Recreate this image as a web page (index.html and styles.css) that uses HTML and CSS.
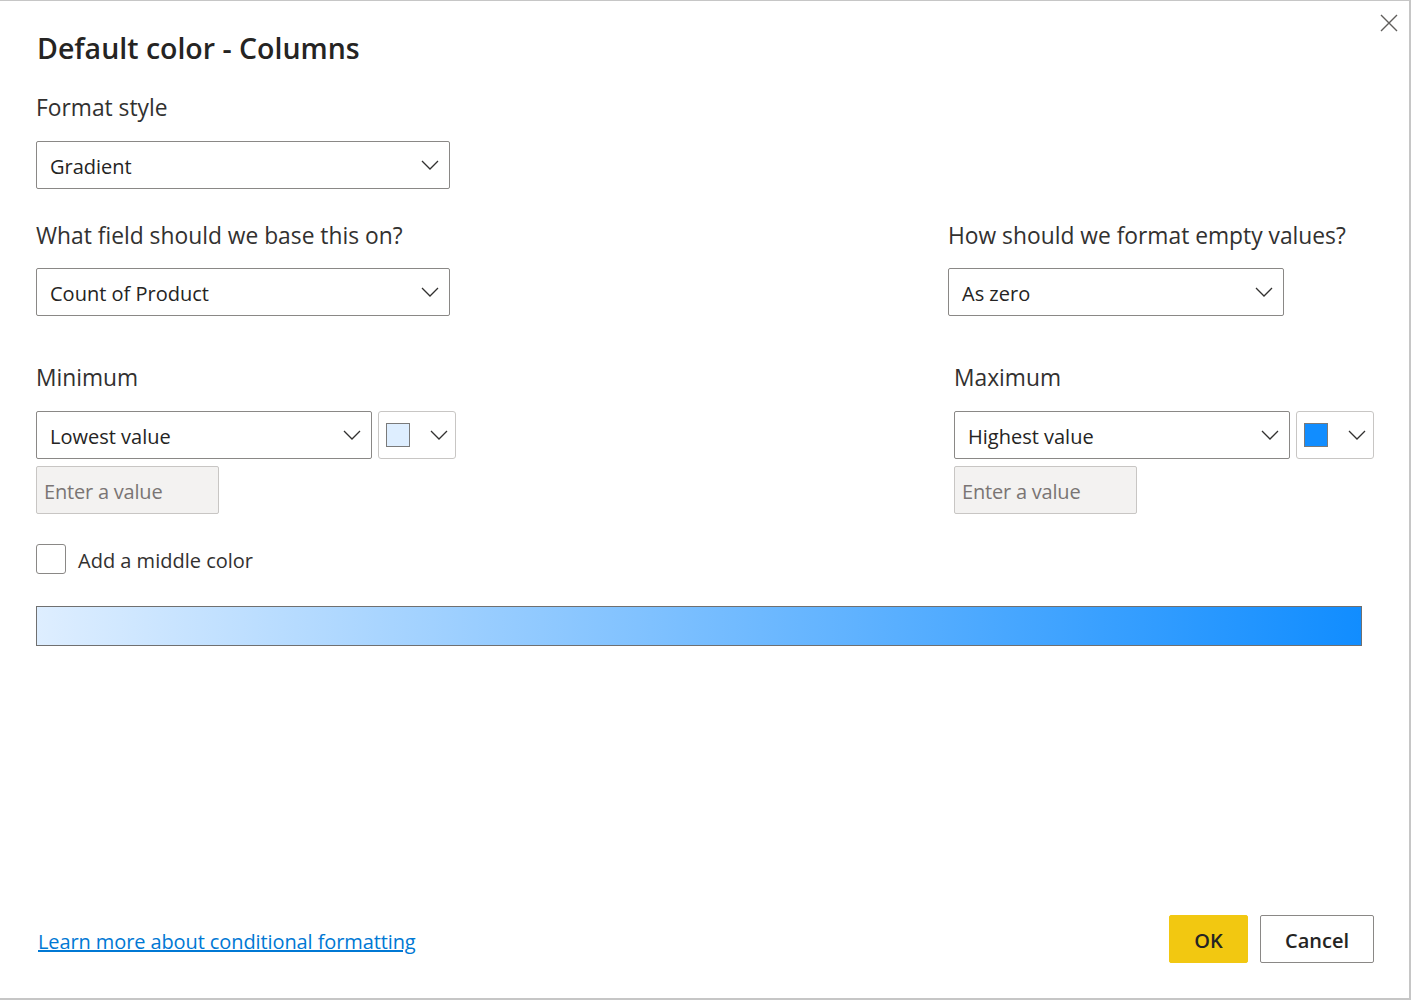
FILE: index.html
```html
<!DOCTYPE html>
<html>
<head>
<meta charset="utf-8">
<link rel="stylesheet" href="styles.css">
</head>
<body>
<div class="dialog">
  <button class="close" aria-label="Close">
    <svg width="18" height="18" viewBox="0 0 18 18"><path d="M1 1 L17 17 M17 1 L1 17" stroke="#605e5c" stroke-width="1.4" fill="none"/></svg>
  </button>
  <h1 class="title">Default color - Columns</h1>

  <div class="label first">Format style</div>
  <div class="select w-wide"><span>Gradient</span><svg class="chev" width="18" height="10" viewBox="0 0 18 10"><path d="M1 1 L9 9 L17 1" stroke="#323130" stroke-width="1.3" fill="none"/></svg></div>

  <div class="row row2">
    <div class="col">
      <div class="label">What field should we base this on?</div>
      <div class="select w-wide"><span>Count of Product</span><svg class="chev" width="18" height="10" viewBox="0 0 18 10"><path d="M1 1 L9 9 L17 1" stroke="#323130" stroke-width="1.3" fill="none"/></svg></div>
    </div>
    <div class="col col-right">
      <div class="label">How should we format empty values?</div>
      <div class="select w-mid"><span>As zero</span><svg class="chev" width="18" height="10" viewBox="0 0 18 10"><path d="M1 1 L9 9 L17 1" stroke="#323130" stroke-width="1.3" fill="none"/></svg></div>
    </div>
  </div>

  <div class="row row3">
    <div class="col">
      <div class="label">Minimum</div>
      <div class="pair">
        <div class="select w-mid"><span>Lowest value</span><svg class="chev" width="18" height="10" viewBox="0 0 18 10"><path d="M1 1 L9 9 L17 1" stroke="#323130" stroke-width="1.3" fill="none"/></svg></div>
        <div class="color"><span class="swatch light"></span><svg class="chev" width="18" height="10" viewBox="0 0 18 10"><path d="M1 1 L9 9 L17 1" stroke="#323130" stroke-width="1.3" fill="none"/></svg></div>
      </div>
      <div class="input">Enter a value</div>
    </div>
    <div class="col col-right2">
      <div class="label">Maximum</div>
      <div class="pair">
        <div class="select w-mid"><span>Highest value</span><svg class="chev" width="18" height="10" viewBox="0 0 18 10"><path d="M1 1 L9 9 L17 1" stroke="#323130" stroke-width="1.3" fill="none"/></svg></div>
        <div class="color"><span class="swatch dark"></span><svg class="chev" width="18" height="10" viewBox="0 0 18 10"><path d="M1 1 L9 9 L17 1" stroke="#323130" stroke-width="1.3" fill="none"/></svg></div>
      </div>
      <div class="input">Enter a value</div>
    </div>
  </div>

  <label class="check"><span class="box"></span><span>Add a middle color</span></label>

  <div class="gradient"></div>

  <div class="footer">
    <a class="link" href="#">Learn more about conditional formatting</a>
    <div class="buttons">
      <button class="btn ok">OK</button>
      <button class="btn cancel">Cancel</button>
    </div>
  </div>
</div>
</body>
</html>
```
FILE: styles.css
```css
html, body {
  margin: 0;
  padding: 0;
  background: #c6c6c6;
  width: 1411px;
  height: 1000px;
  overflow: hidden;
}
body {
  font-family: "Segoe UI", "Open Sans", sans-serif;
  color: #252423;
}
.dialog {
  position: relative;
  box-sizing: border-box;
  margin-top: 1px;
  width: 1409px;
  height: 997px;
  background: #fff;
  padding: 0 0 0 36px;
  display: flex;
  flex-direction: column;
}
.close {
  position: absolute;
  top: 13px;
  left: 1380px;
  padding: 0;
  border: 0;
  background: none;
  width: 18px;
  height: 18px;
  display: block;
}
.close svg { display: block; }
.title {
  margin: 29px 0 0 1px;
  font-size: 28.5px;
  line-height: 36px;
  font-weight: 600;
  color: #252423;
}
.label {
  font-size: 22.8px;
  line-height: 30px;
  color: #323130;
  margin-left: 0;
  white-space: nowrap;
}
.label.first { margin-top: 27px; margin-bottom: 18px; }
.row {
  display: flex;
}
.row2 { margin-top: 32px; }
.row2 .label { margin-bottom: 17px; }
.row3 { margin-top: 47px; }
.row3 .label { margin-bottom: 18px; }
.col { display: flex; flex-direction: column; }
.col-right { margin-left: 498px; }
.col-right2 { margin-left: 498px; }
.row2 .col:first-child { width: 414px; }
.row3 .col:first-child { width: 420px; }
.select {
  box-sizing: border-box;
  height: 48px;
  border: 1px solid #8a8886;
  border-radius: 2px;
  display: flex;
  align-items: center;
  justify-content: space-between;
  padding: 0 10px 0 13px;
  font-size: 20px;
  color: #252423;
  background: #fff;
}
.select span { padding-top: 2px; }
.w-wide { width: 414px; }
.w-mid { width: 336px; }
.chev { display: block; flex: none; }
.pair { display: flex; gap: 6px; }
.color {
  box-sizing: border-box;
  width: 78px;
  height: 48px;
  border: 1px solid #c8c6c4;
  border-radius: 3px;
  display: flex;
  align-items: center;
  justify-content: space-between;
  padding: 0 7px 0 7px;
}
.swatch {
  box-sizing: border-box;
  width: 24px;
  height: 24px;
  border: 1px solid #7a7a7a;
  display: block;
}
.swatch.light { background: #deeeff; }
.swatch.dark { background: #118dff; }
.input {
  box-sizing: border-box;
  margin-top: 7px;
  width: 183px;
  height: 48px;
  background: #f3f2f1;
  border: 1px solid #c8c6c4;
  border-radius: 2px;
  padding: 2px 0 0 7px;
  display: flex;
  align-items: center;
  font-size: 20px;
  color: #7a7574;
  letter-spacing: -0.2px;
}
.check {
  margin-top: 30px;
  display: flex;
  align-items: center;
  gap: 12px;
  font-size: 20px;
  color: #323130;
}
.check span:last-child { padding-top: 2px; }
.box {
  box-sizing: border-box;
  width: 30px;
  height: 30px;
  border: 1px solid #8a8886;
  border-radius: 3px;
  display: block;
}
.gradient {
  box-sizing: border-box;
  margin-top: 32px;
  width: 1326px;
  height: 40px;
  border: 1px solid #707070;
  background: linear-gradient(to right, #deeeff, #118dff);
}
.footer {
  margin-top: auto;
  margin-bottom: 35px;
  display: flex;
  align-items: center;
  justify-content: space-between;
  width: 1338px;
}
.link {
  margin-left: 2px;
  margin-top: 4px;
  font-size: 20px;
  color: #0078d4;
  text-decoration: underline;
  letter-spacing: -0.1px;
}
.buttons { display: flex; gap: 12px; }
.btn {
  box-sizing: border-box;
  height: 48px;
  border-radius: 2px;
  font-family: "Segoe UI", "Open Sans", sans-serif;
  font-size: 20px;
  font-weight: 600;
  color: #252423;
  padding: 2px 0 0 0;
}
.ok {
  width: 79px;
  background: #f2c811;
  border: 1px solid #f2c811;
}
.cancel {
  width: 114px;
  background: #fff;
  border: 1px solid #8a8886;
}
```
